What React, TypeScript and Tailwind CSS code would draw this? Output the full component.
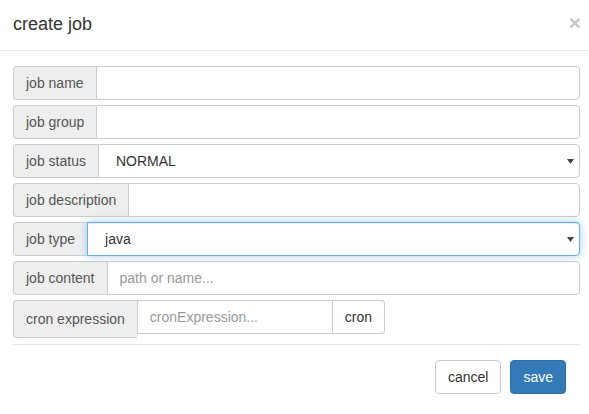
import React from "react";

const font = { fontFamily: '"Liberation Sans", Arial, sans-serif' };

function Addon({ label, tall }: { label: string; tall?: boolean }) {
  return (
    <span
      className={`flex items-center px-3 bg-[#eee] border border-[#ccc] border-r-0 rounded-l-[4px] text-[14px] text-[#555] whitespace-nowrap ${
        tall ? "h-[38px]" : "h-[34px]"
      }`}
    >
      {label}
    </span>
  );
}

function Arrow() {
  return (
    <svg width="7" height="5" viewBox="0 0 7 5" className="absolute right-[5px] top-[14px]">
      <path d="M0 0 L7 0 L3.5 5 Z" fill="#444" />
    </svg>
  );
}

function TextRow({ label, placeholder }: { label: string; placeholder?: string }) {
  return (
    <div className="flex">
      <Addon label={label} />
      <input
        type="text"
        placeholder={placeholder}
        className="flex-1 min-w-0 h-[34px] px-3 border border-[#ccc] rounded-r-[4px] text-[14px] text-[#555] placeholder-[#999] outline-none"
        style={font}
      />
    </div>
  );
}

function SelectRow({ label, value, focused }: { label: string; value: string; focused?: boolean }) {
  return (
    <div className="flex">
      <Addon label={label} />
      <div
        className={`relative flex-1 flex items-center h-[34px] pl-[17px] border rounded-r-[4px] text-[14px] text-[#333] bg-white ${
          focused
            ? "border-[#66afe9] shadow-[inset_0_1px_1px_rgba(0,0,0,0.075),0_0_8px_rgba(102,175,233,0.6)]"
            : "border-[#ccc]"
        }`}
      >
        {value}
        <Arrow />
      </div>
    </div>
  );
}

export default function App() {
  return (
    <div className="w-[589px] h-[414px] bg-white text-[#333] overflow-hidden" style={font}>
      {/* Header */}
      <div className="flex items-center justify-between h-[51px] pl-[13px] pr-[8px] border-b border-[#e5e5e5]">
        <h4 className="text-[18px] leading-none text-[#333] -mt-[2px]">create job</h4>
        <span className="text-[21px] font-bold leading-none text-[#c8c8c8] -mt-[6px]">×</span>
      </div>

      {/* Body */}
      <div className="pl-[13px] pr-[9px] pt-[15px]">
        <div className="flex flex-col gap-[5px]">
          <TextRow label="job name" />
          <TextRow label="job group" />
          <SelectRow label="job status" value="NORMAL" />
          <TextRow label="job description" />
          <SelectRow label="job type" value="java" focused />
          <TextRow label="job content" placeholder="path or name..." />
          <div className="flex items-start">
            <Addon label="cron expression" tall />
            <input
              type="text"
              placeholder="cronExpression..."
              className="w-[196px] h-[34px] px-3 border border-[#ccc] text-[14px] text-[#555] placeholder-[#999] outline-none"
              style={font}
            />
            <button
              className="h-[34px] px-3 border border-l-0 border-[#ccc] rounded-r-[4px] bg-white text-[14px] text-[#333]"
              style={font}
            >
              cron
            </button>
          </div>
        </div>

        <div className="mt-[6px] border-t border-[#e5e5e5]" />

        {/* Footer */}
        <div className="flex justify-end gap-[9px] pt-[15px] pr-[14px]">
          <button
            className="h-[34px] px-3 border border-[#ccc] rounded-[4px] bg-white text-[14px] text-[#333]"
            style={font}
          >
            cancel
          </button>
          <button
            className="h-[34px] px-3 border border-[#2e6da4] rounded-[4px] bg-[#337ab7] text-[14px] text-white"
            style={font}
          >
            save
          </button>
        </div>
      </div>
    </div>
  );
}
